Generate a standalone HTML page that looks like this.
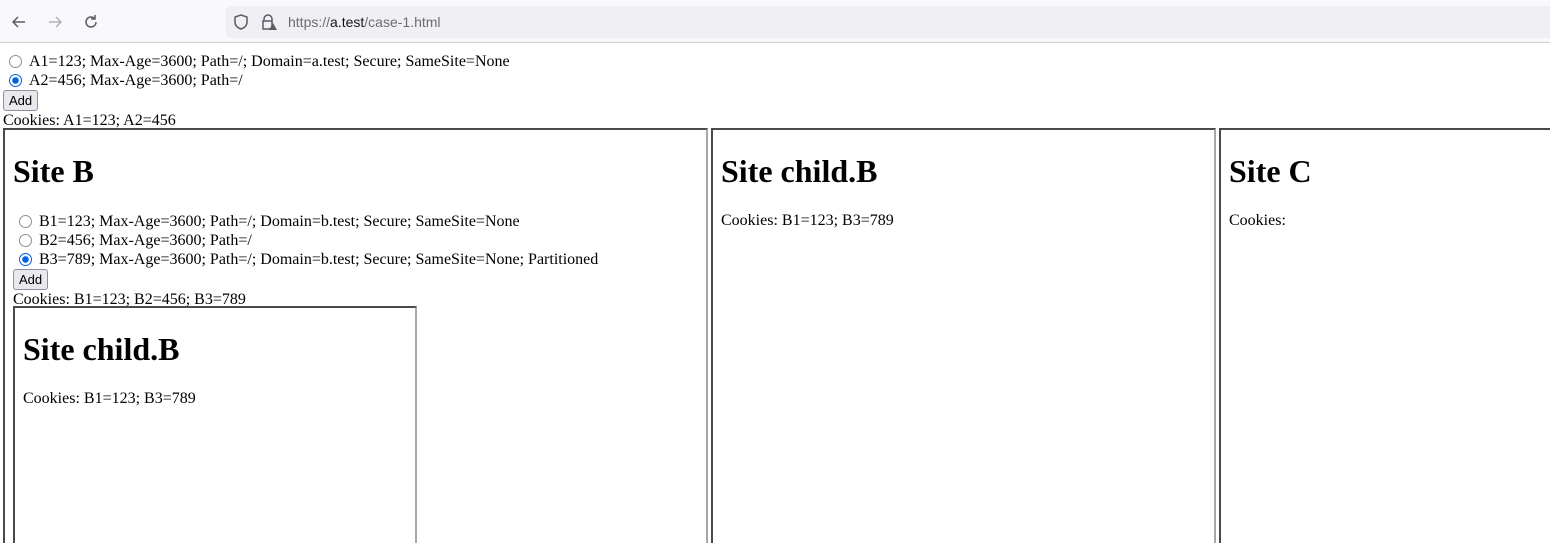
<!DOCTYPE html>
<html style="overflow:hidden"><head><style>
html,body{margin:0;width:1550px;height:543px;overflow:hidden}
body{background:#fff;font-family:"Liberation Serif",serif;font-size:16px;position:relative}
.bar{position:absolute;left:0;top:0;width:1550px;height:43px;background:#f9f9fb;border-bottom:1px solid #cfcfd8;box-sizing:border-box}
.url{position:absolute;left:226px;top:6px;width:1324px;height:32px;background:#f0f0f4;border-radius:4px 0 0 4px}
.urltext{position:absolute;left:288px;top:14px;font-family:"Liberation Sans",sans-serif;font-size:14px;color:#6b6b73}
.urltext b{font-weight:normal;color:#15141a}
.f{position:absolute;border:2px solid;border-color:#4a4a4a #a8a8a8 #a8a8a8 #4a4a4a;box-sizing:border-box;overflow:hidden;background:#fff}
.in{padding:0 8px}
h1{font-size:32px;margin:23px 0 22px;line-height:37px}
.r{height:19px;line-height:19px;display:flex;align-items:center;white-space:nowrap}
.rad{width:13px;height:13px;border:1px solid #8f8f9d;border-radius:50%;margin:0 7px 0 6px;box-sizing:border-box;flex:none}
.on{border:1px solid #0060df;background:radial-gradient(circle,#0060df 0 3px,#fff 3.5px)}
button{font-family:"Liberation Sans",sans-serif;font-size:13px;padding:1px 5px;height:21px;border:1px solid #8f8f9d;border-radius:3px;background:#e9e9ed;margin:0;display:block}
p{margin:16px 0;line-height:18px}
.ck{line-height:18px;margin-top:1px}
</style></head><body>
<div class="bar">
<svg style="position:absolute;left:10px;top:13px" width="18" height="18" viewBox="0 0 18 18" fill="none" stroke="#5b5b66" stroke-width="1.5"><path d="M15 9H3M8 4L3 9l5 5"/></svg>
<svg style="position:absolute;left:46px;top:13px" width="18" height="18" viewBox="0 0 18 18" fill="none" stroke="#b0b0b8" stroke-width="1.5"><path d="M3 9h12M10 4l5 5-5 5"/></svg>
<svg style="position:absolute;left:82px;top:13px" width="18" height="18" viewBox="0 0 18 18" fill="none" stroke="#5b5b66" stroke-width="1.5"><path d="M14 9a5 5 0 1 1-2-4M13 2v4H9"/></svg>
<div class="url"></div>
<svg style="position:absolute;left:233px;top:13px" width="16" height="18" viewBox="0 0 16 18" fill="none" stroke="#5b5b66" stroke-width="1.5"><path d="M8 2l6 2v5c0 4-3 6-6 7-3-1-6-3-6-7V4z"/></svg>
<svg style="position:absolute;left:260px;top:13px" width="18" height="18" viewBox="0 0 18 18"><path d="M4 8V6a4 4 0 0 1 8 0v2" fill="none" stroke="#5b5b66" stroke-width="1.5"/><rect x="3" y="8" width="9" height="8" fill="none" stroke="#5b5b66" stroke-width="1.5"/><path d="M13 10l4 7h-8z" fill="#5b5b66"/></svg>
<div class="urltext">https://<b>a.test</b>/case-1.html</div>
</div>
<div style="position:absolute;left:3px;top:52px">
<div class="r"><span class="rad"></span>A1=123; Max-Age=3600; Path=/; Domain=a.test; Secure; SameSite=None</div>
<div class="r"><span class="rad on"></span>A2=456; Max-Age=3600; Path=/</div>
<button>Add</button>
<div class="ck">Cookies: A1=123; A2=456</div>
</div>
<div class="f" style="left:3px;top:128px;width:705px;height:430px"><div class="in">
<h1>Site B</h1>
<div class="r"><span class="rad"></span>B1=123; Max-Age=3600; Path=/; Domain=b.test; Secure; SameSite=None</div>
<div class="r"><span class="rad"></span>B2=456; Max-Age=3600; Path=/</div>
<div class="r"><span class="rad on"></span>B3=789; Max-Age=3600; Path=/; Domain=b.test; Secure; SameSite=None; Partitioned</div>
<button>Add</button>
<div class="ck">Cookies: B1=123; B2=456; B3=789</div>
<div class="f" style="position:relative;width:404px;height:300px;margin-top:-3px"><div class="in"><h1>Site child.B</h1><p>Cookies: B1=123; B3=789</p></div></div>
</div></div>
<div class="f" style="left:711px;top:128px;width:505px;height:430px"><div class="in"><h1>Site child.B</h1><p>Cookies: B1=123; B3=789</p></div></div>
<div class="f" style="left:1219px;top:128px;width:360px;height:430px"><div class="in"><h1>Site C</h1><p>Cookies:</p></div></div>
</body></html>
